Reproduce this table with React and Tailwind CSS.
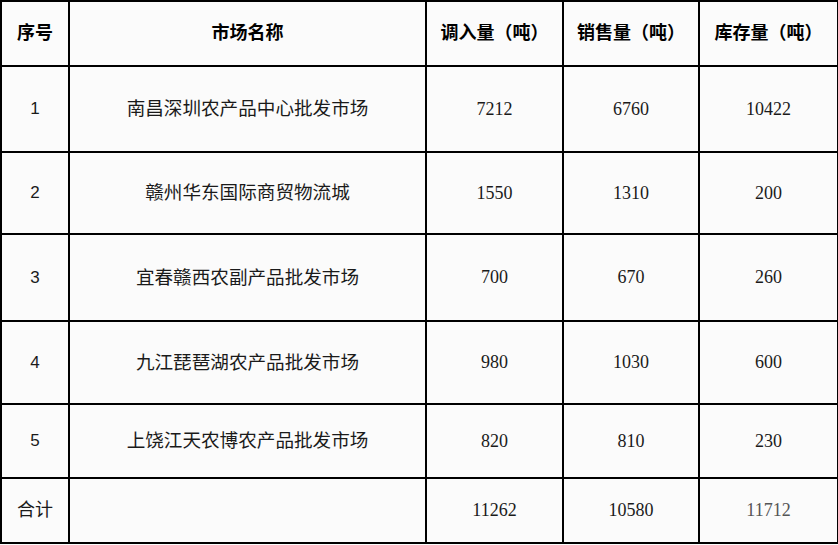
const rows = [
  { no: '1', name: '南昌深圳农产品中心批发市场', inflow: '7212', sales: '6760', stock: '10422', h: 'h-[86px]' },
  { no: '2', name: '赣州华东国际商贸物流城', inflow: '1550', sales: '1310', stock: '200', h: 'h-[82px]' },
  { no: '3', name: '宜春赣西农副产品批发市场', inflow: '700', sales: '670', stock: '260', h: 'h-[87px]' },
  { no: '4', name: '九江琵琶湖农产品批发市场', inflow: '980', sales: '1030', stock: '600', h: 'h-[83px]' },
  { no: '5', name: '上饶江天农博农产品批发市场', inflow: '820', sales: '810', stock: '230', h: 'h-[74px]' },
]

const cjk = "font-['Liberation_Serif','Noto_Sans_CJK_SC',serif]"
const cell = 'border-2 border-black text-center align-middle p-0'

export default function App() {
  return (
    <div className="w-[838px] h-[545px] bg-[#fbfbfb] overflow-hidden">
      <table className={`table-fixed border-collapse w-[837px] text-[18px] text-[#1a1a1a] ${cjk}`}>
        <colgroup>
          <col className="w-[68px]" />
          <col className="w-[357px]" />
          <col className="w-[137px]" />
          <col className="w-[136px]" />
          <col className="w-[139px]" />
        </colgroup>
        <thead>
          <tr className="h-[65px] font-bold text-black">
            <th className={cell}>序号</th>
            <th className={cell}>市场名称</th>
            <th className={cell}>调入量（吨）</th>
            <th className={cell}>销售量（吨）</th>
            <th className={cell}>库存量（吨）</th>
          </tr>
        </thead>
        <tbody>
          {rows.map(r => (
            <tr key={r.no} className={r.h}>
              <td className={`${cell} font-['Liberation_Sans',sans-serif] text-[17px]`}>{r.no}</td>
              <td className={`${cell} text-[18.6px]`}>{r.name}</td>
              <td className={cell}>{r.inflow}</td>
              <td className={cell}>{r.sales}</td>
              <td className={cell}>{r.stock}</td>
            </tr>
          ))}
          <tr className="h-[65px]">
            <td className={cell}>合计</td>
            <td className={cell}></td>
            <td className={cell}>11262</td>
            <td className={cell}>10580</td>
            <td className={`${cell} text-[#555]`}>11712</td>
          </tr>
        </tbody>
      </table>
    </div>
  )
}
